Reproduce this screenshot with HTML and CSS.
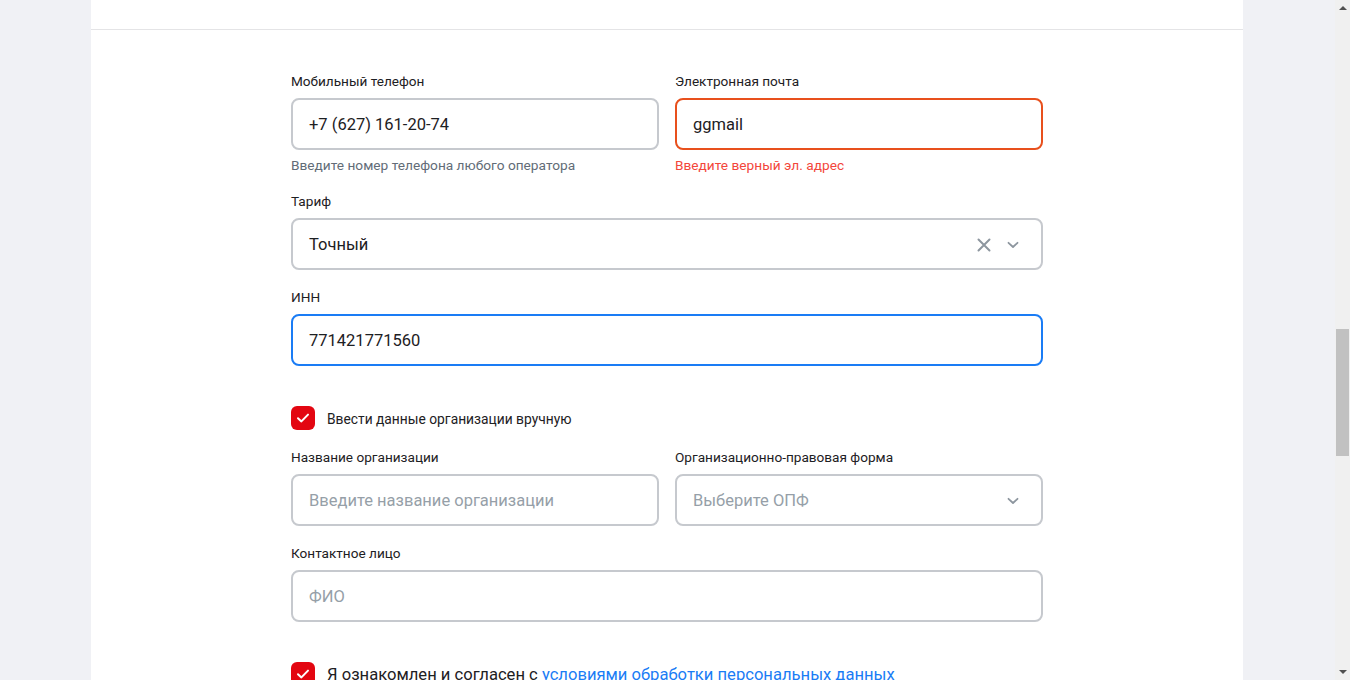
FILE: index.html
```html
<!DOCTYPE html>
<html lang="ru">
<head>
<meta charset="utf-8">
<title>Форма</title>
<link rel="stylesheet" href="styles.css">
</head>
<body>
<div class="screen">
  <main class="viewport">
    <div class="card">
      <div class="card-head"></div>
      <form class="form">
        <div class="row two">
          <div class="field">
            <label class="label">Мобильный телефон</label>
            <div class="input"><span class="value">+7 (627) 161-20-74</span></div>
            <div class="hint">Введите номер телефона любого оператора</div>
          </div>
          <div class="field">
            <label class="label">Электронная почта</label>
            <div class="input error"><span class="value">ggmail</span></div>
            <div class="hint err">Введите верный эл. адрес</div>
          </div>
        </div>

        <div class="field">
          <label class="label">Тариф</label>
          <div class="input">
            <span class="value">Точный</span>
            <span class="icons">
              <svg class="clear" width="14" height="14" viewBox="0 0 14 14"><path d="M1.5 1.5 L12.5 12.5 M12.5 1.5 L1.5 12.5" stroke="#8d969f" stroke-width="2" stroke-linecap="round" fill="none"/></svg>
              <svg class="chev" width="12" height="8" viewBox="0 0 12 8"><path d="M1.5 1.8 L6 6 L10.5 1.8" stroke="#8d969f" stroke-width="1.8" stroke-linecap="round" stroke-linejoin="round" fill="none"/></svg>
            </span>
          </div>
        </div>

        <div class="field">
          <label class="label">ИНН</label>
          <div class="input focus"><span class="value">771421771560</span></div>
        </div>

        <div class="check-row spaced">
          <span class="box"><svg width="14" height="12" viewBox="0 0 14 12"><path d="M2 6.2 L5.4 9.4 L12 2.6" stroke="#fff" stroke-width="2" stroke-linecap="round" stroke-linejoin="round" fill="none"/></svg></span>
          <span class="check-text">Ввести данные организации вручную</span>
        </div>

        <div class="row two">
          <div class="field">
            <label class="label">Название организации</label>
            <div class="input"><span class="placeholder">Введите название организации</span></div>
          </div>
          <div class="field">
            <label class="label">Организационно-правовая форма</label>
            <div class="input">
              <span class="placeholder">Выберите ОПФ</span>
              <span class="icons">
                <svg class="chev" width="12" height="8" viewBox="0 0 12 8"><path d="M1.5 1.8 L6 6 L10.5 1.8" stroke="#8d969f" stroke-width="1.8" stroke-linecap="round" stroke-linejoin="round" fill="none"/></svg>
              </span>
            </div>
          </div>
        </div>

        <div class="field">
          <label class="label">Контактное лицо</label>
          <div class="input"><span class="placeholder">ФИО</span></div>
        </div>

        <div class="check-row spaced">
          <span class="box"><svg width="14" height="12" viewBox="0 0 14 12"><path d="M2 6.2 L5.4 9.4 L12 2.6" stroke="#fff" stroke-width="2" stroke-linecap="round" stroke-linejoin="round" fill="none"/></svg></span>
          <span class="check-text big">Я ознакомлен и согласен с <a class="link" href="#">условиями обработки персональных данных</a></span>
        </div>
      </form>
    </div>
  </main>
  <aside class="scrollbar">
    <span class="arrow up"></span>
    <div class="track"><div class="thumb"></div></div>
    <span class="arrow down"></span>
  </aside>
</div>
</body>
</html>
```

FILE: styles.css
```css
* { box-sizing: border-box; }
html, body { margin: 0; padding: 0; height: 100%; overflow: hidden; }
body {
  font-family: Roboto, "Liberation Sans", Arial, sans-serif;
  color: #1d2023;
  background: #f0f1f5;
}
.screen { display: flex; height: 680px; }
.viewport {
  flex: 1;
  display: flex;
  justify-content: center;
  overflow: hidden;
}
.card {
  width: 1152px;
  margin-right: 1px;
  background: #fff;
  height: 760px;
}
.card-head {
  height: 30px;
  border-bottom: 1px solid #e4e4e6;
}
.form {
  width: 752px;
  margin: 0 auto;
  padding-top: 42px;
  display: flex;
  flex-direction: column;
  gap: 18px;
}
.row.two {
  display: grid;
  grid-template-columns: 1fr 1fr;
  gap: 16px;
}
.field { display: flex; flex-direction: column; }
.label {
  display: block;
  height: 18px;
  font-size: 13.6px;
  line-height: 18px;
  margin-bottom: 8px;
  color: #1d2023;
}
.input {
  height: 52px;
  flex: none;
  border: 2px solid #c6c9ce;
  border-radius: 8px;
  padding: 1px 22px 0 16px;
  display: flex;
  align-items: center;
  font-size: 16.5px;
}
.input.error { border-color: #e8501d; }
.input.focus { border-color: #1a7cf5; }
.value { color: #1d2023; flex: 1; }
.placeholder { color: #969fa8; flex: 1; }
.icons { display: flex; align-items: center; gap: 16px; }
.hint {
  height: 18px;
  font-size: 13.7px;
  line-height: 18px;
  margin-top: 6px;
  color: #626c77;
}
.hint.err { color: #f3463b; }
.check-row {
  display: flex;
  align-items: center;
  gap: 12px;
  height: 24px;
}
.check-row.spaced { margin-top: 22px; }
.box {
  width: 24px;
  height: 24px;
  border-radius: 6px;
  background: #e30611;
  display: flex;
  align-items: center;
  justify-content: center;
  flex: none;
}
.check-text { font-size: 13.8px; line-height: 18px; padding-top: 2px; }
.check-text.big { font-size: 16.6px; line-height: 22px; }
.link { color: #1a7cf5; text-decoration: none; }

.scrollbar {
  width: 15px;
  background: #f0f0f0;
  display: flex;
  flex-direction: column;
  align-items: center;
  flex: none;
}
.arrow {
  width: 0; height: 0;
  border-left: 4px solid transparent;
  border-right: 4px solid transparent;
  margin: 6px 0;
}
.arrow.up { border-bottom: 4px solid #505050; }
.arrow.down { border-top: 4px solid #505050; }
.track { flex: 1; width: 100%; display: flex; justify-content: center; }
.thumb {
  width: 13px;
  height: 127px;
  margin-top: 313px;
  background: #c1c1c1;
}
```
